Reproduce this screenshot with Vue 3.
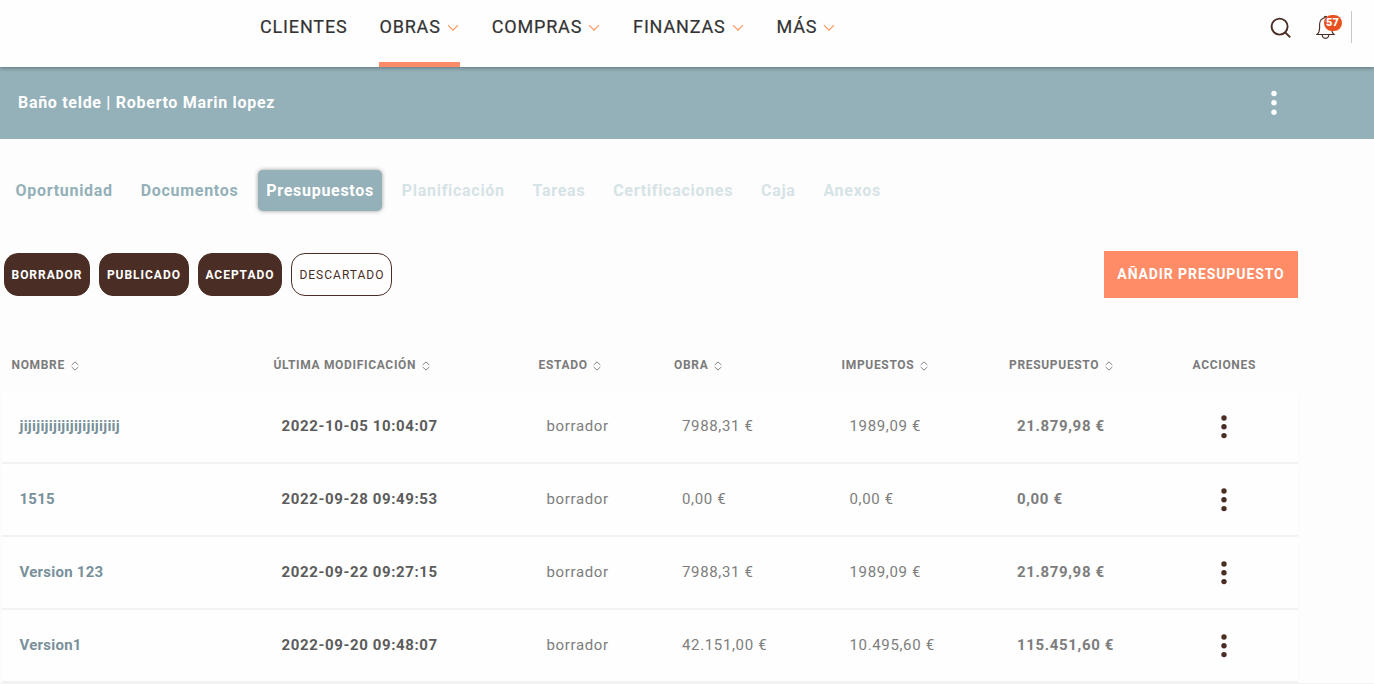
<template>
  <div class="page">
    <header class="topbar">
      <nav class="menu">
        <a
          v-for="item in menu"
          :key="item.label"
          class="menu-item"
          :class="{ active: item.active }"
        >
          <span>{{ item.label }}</span>
          <svg v-if="item.children" class="chevron" width="12" height="8" viewBox="0 0 12 8">
            <path d="M1 1.2 L6 6.2 L11 1.2" />
          </svg>
        </a>
      </nav>
      <div class="tools">
        <svg class="search" width="22" height="22" viewBox="0 0 22 22">
          <circle cx="9.6" cy="9.6" r="8" />
          <path d="M15.2 15.4 L20.2 20.4" />
        </svg>
        <div class="bell">
          <svg width="20" height="25" viewBox="0 0 20 25">
            <path d="M1 19.5 H18 C15.8 17.7 15.6 16 15.6 13 V9 C15.6 5.3 13 2.8 9.5 2.8 C6 2.8 3.6 5.3 3.6 9 V13 C3.6 16 3.2 17.7 1 19.5 Z" />
            <path d="M8.2 2.6 C8.2 0.9 10.8 0.9 10.8 2.6" />
            <path d="M6.2 19.8 C6.4 24.5 12.6 24.5 12.8 19.8" />
          </svg>
          <span class="badge">57</span>
        </div>
        <span class="separator"></span>
      </div>
    </header>

    <section class="title-bar">
      <h1>Baño telde | Roberto Marin lopez</h1>
      <svg class="dots" width="6" height="26" viewBox="0 0 6 26">
        <circle cx="3" cy="3.5" r="2.7" />
        <circle cx="3" cy="12.7" r="2.7" />
        <circle cx="3" cy="22.2" r="2.7" />
      </svg>
    </section>

    <nav class="tabs">
      <a v-for="tab in tabs" :key="tab.label" class="tab" :class="tab.state">{{ tab.label }}</a>
    </nav>

    <div class="actions">
      <div class="filters">
        <button v-for="f in filters" :key="f.label" class="filter" :class="{ on: f.on }">
          {{ f.label }}
        </button>
      </div>
      <button class="add-btn">AÑADIR PRESUPUESTO</button>
    </div>

    <div class="table">
      <div class="row head">
        <div v-for="col in columns" :key="col" class="cell">
          <span>{{ col }}</span>
          <svg v-if="col !== 'ACCIONES'" class="sort" width="8" height="10" viewBox="0 0 8 10">
            <path d="M0.7 4 L4 0.9 L7.3 4" />
            <path d="M0.7 6 L4 9.1 L7.3 6" />
          </svg>
        </div>
      </div>
      <div v-for="row in rows" :key="row.date" class="row body">
        <div class="cell name">{{ row.name }}</div>
        <div class="cell date">{{ row.date }}</div>
        <div class="cell">borrador</div>
        <div class="cell">{{ row.obra }} €</div>
        <div class="cell">{{ row.taxes }} €</div>
        <div class="cell total">{{ row.total }} €</div>
        <div class="cell options">
          <svg class="dots" width="6" height="24" viewBox="0 0 6 24">
            <circle cx="3" cy="3" r="2.7" />
            <circle cx="3" cy="11.8" r="2.7" />
            <circle cx="3" cy="20.6" r="2.7" />
          </svg>
        </div>
      </div>
    </div>
    <div class="bottom-line"></div>
  </div>
</template>

<script setup>
const menu = [
  { label: 'CLIENTES' },
  { label: 'OBRAS', children: true, active: true },
  { label: 'COMPRAS', children: true },
  { label: 'FINANZAS', children: true },
  { label: 'MÁS', children: true }
]

const tabs = [
  { label: 'Oportunidad' },
  { label: 'Documentos' },
  { label: 'Presupuestos', state: 'active' },
  { label: 'Planificación', state: 'disabled' },
  { label: 'Tareas', state: 'disabled' },
  { label: 'Certificaciones', state: 'disabled' },
  { label: 'Caja', state: 'disabled' },
  { label: 'Anexos', state: 'disabled' }
]

const filters = [
  { label: 'BORRADOR', on: true },
  { label: 'PUBLICADO', on: true },
  { label: 'ACEPTADO', on: true },
  { label: 'DESCARTADO', on: false }
]

const columns = ['NOMBRE', 'ÚLTIMA MODIFICACIÓN', 'ESTADO', 'OBRA', 'IMPUESTOS', 'PRESUPUESTO', 'ACCIONES']

const rows = [
  { name: 'jijijijijijijijijijijiij', date: '2022-10-05 10:04:07', obra: '7988,31', taxes: '1989,09', total: '21.879,98' },
  { name: '1515', date: '2022-09-28 09:49:53', obra: '0,00', taxes: '0,00', total: '0,00' },
  { name: 'Version 123', date: '2022-09-22 09:27:15', obra: '7988,31', taxes: '1989,09', total: '21.879,98' },
  { name: 'Version1', date: '2022-09-20 09:48:07', obra: '42.151,00', taxes: '10.495,60', total: '115.451,60' }
]
</script>

<style>
body {
  background: #fdfdfd;
  overflow: hidden;
}
</style>

<style scoped>
.page {
  height: 684px;
  overflow: hidden;
  background: #fdfdfd;
  font-family: Roboto, "Liberation Sans", sans-serif;
  color: #777;
}

.topbar {
  position: relative;
  z-index: 1;
  display: flex;
  justify-content: space-between;
  height: 67px;
  background: #fefefe;
  box-shadow: 0 1px 4px rgba(0, 0, 0, 0.34);
}

.menu {
  display: flex;
  gap: 31.9px;
  margin-left: 260px;
}

.menu-item {
  display: flex;
  box-sizing: border-box;
  height: 67px;
  padding-top: 16px;
  font-size: 18px;
  line-height: 22px;
  letter-spacing: 0.84px;
  color: #333;
  -webkit-text-stroke: 0.2px #333;
  border-bottom: 5px solid transparent;
}

.menu-item.active {
  border-color: #ff8c66;
}

.chevron {
  margin: 8px 1px 0 6px;
  fill: none;
  stroke: #ff9355;
  stroke-width: 1.1;
}

.tools {
  display: flex;
  margin-right: 22px;
}

.search {
  margin: 17px 24px 0 0;
  fill: none;
  stroke: #4a2d25;
  stroke-width: 1.9;
}

.bell {
  position: relative;
  width: 35.5px;
  padding-top: 15px;
}

.bell svg {
  fill: none;
  stroke: #4a2d25;
  stroke-width: 1.1;
}

.badge {
  position: absolute;
  top: 15px;
  left: 8px;
  width: 18px;
  height: 16px;
  border-radius: 9px;
  background: #e8501f;
  color: #fff;
  font-size: 11px;
  font-weight: 900;
  line-height: 16px;
  text-align: center;
}

.separator {
  width: 1px;
  height: 32px;
  margin-top: 11px;
  background: #c8c8c8;
}

.title-bar {
  display: flex;
  justify-content: space-between;
  height: 72px;
  background: #94b0b8;
}

.title-bar h1 {
  margin: 26px 0 0 18px;
  font-size: 16px;
  font-weight: 700;
  line-height: 20px;
  letter-spacing: 0.7px;
  color: #fff;
}

.title-bar .dots {
  margin: 23px 97.5px 0 0;
  fill: #fff;
}

.tabs {
  display: flex;
  gap: 11.8px;
  margin: 31px 0 0 7.5px;
}

.tab {
  padding: 0 8px;
  border-radius: 5px;
  font-size: 16px;
  font-weight: 700;
  line-height: 41px;
  letter-spacing: 0.715px;
  color: #94b0b8;
}

.tab.active {
  background: #94b0b8;
  color: #fff;
  box-shadow: 0 0 4px rgba(0, 0, 0, 0.4);
}

.tab.disabled {
  color: #d6e3e6;
}

.actions {
  display: flex;
  justify-content: space-between;
  margin: 40px 76px 0 4px;
}

.filters {
  display: flex;
  gap: 9px;
  padding-top: 2px;
}

.filter {
  box-sizing: border-box;
  height: 43px;
  padding: 0 7px;
  border: 1px solid #4a2e26;
  border-radius: 14px;
  background: #fefefe;
  font-family: inherit;
  font-size: 12px;
  letter-spacing: 1px;
  color: #4a2e26;
}

.filter.on {
  padding: 0 7px 0 6.5px;
  letter-spacing: 0.97px;
  background: #4a2e26;
  font-weight: 700;
  color: #fff;
}

.add-btn {
  width: 194px;
  height: 47px;
  padding: 0 0 2px;
  border: none;
  background: #ff8c66;
  font-family: inherit;
  font-size: 14px;
  font-weight: 700;
  letter-spacing: 0.9px;
  color: #fff;
}

.table {
  margin: 52px 76px 0 2px;
}

.row {
  display: grid;
  grid-template-columns: 262px 265px 135.5px 167.5px 167.5px 183.5px 1fr;
}

.head {
  height: 41px;
  padding-left: 9.5px;
  font-size: 12px;
  font-weight: 700;
  line-height: 30px;
  letter-spacing: 0.68px;
  color: #7b7b7b;
}

.head .cell {
  display: flex;
}

.sort {
  margin: 11px 0 0 5.8px;
  fill: none;
  stroke: #777;
  stroke-width: 0.9;
}

.body {
  box-sizing: border-box;
  height: 73px;
  padding-left: 17.5px;
  border-bottom: 2px solid #f2f2f2;
  background: #fefefe;
  box-shadow: 0 4px 3px rgba(0, 0, 0, 0.025);
  font-size: 15px;
  line-height: 71px;
  letter-spacing: 0.65px;
  color: #7d7d7d;
}

.name {
  font-weight: 700;
  letter-spacing: 0.25px;
  color: #78909a;
}

.date {
  font-weight: 700;
  letter-spacing: 0.62px;
  color: #5c5c5c;
}

.total {
  font-weight: 700;
}

.options {
  display: flex;
  align-items: center;
  padding-left: 20px;
}

.options .dots {
  fill: #4a2d25;
}

.bottom-line {
  height: 1px;
  background: #f1f1f1;
}
</style>
